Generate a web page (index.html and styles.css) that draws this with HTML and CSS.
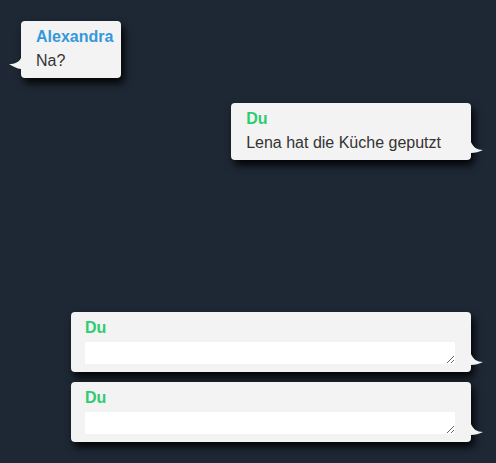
FILE: index.html
```html
<!DOCTYPE html>
<html lang="de">
<head>
<meta charset="utf-8">
<title>Chat</title>
<link rel="stylesheet" href="styles.css">
</head>
<body>
<div class="chat">
  <div class="messages">
    <div class="bubble bubble--in">
      <div class="name name--them">Alexandra</div>
      <div class="text">Na?</div>
    </div>
    <div class="bubble bubble--out">
      <div class="name name--me">Du</div>
      <div class="text">Lena hat die Küche geputzt</div>
    </div>
  </div>
  <div class="composer">
    <div class="bubble bubble--out bubble--input">
      <div class="name name--me">Du</div>
      <textarea class="field"></textarea>
    </div>
    <div class="bubble bubble--out bubble--input">
      <div class="name name--me">Du</div>
      <textarea class="field"></textarea>
    </div>
  </div>
</div>
</body>
</html>
```

FILE: styles.css
```css
html, body {
  margin: 0;
  height: 100%;
}
body {
  background: #1e2835;
  font-family: "Liberation Sans", Arial, sans-serif;
  font-size: 16px;
  line-height: 22px;
  color: #333333;
}
.chat {
  box-sizing: border-box;
  height: 100vh;
  padding: 21px 25px 21px 21px;
  display: flex;
  flex-direction: column;
}
.messages {
  flex: 1;
  display: flex;
  flex-direction: column;
  gap: 25px;
}
.composer {
  display: flex;
  flex-direction: column;
  align-items: flex-end;
  gap: 10px;
}
.bubble {
  position: relative;
  background: #f3f3f3;
  border-radius: 4px;
  padding: 5px 15px 6px 15px;
  box-shadow: 3px 5px 8px rgba(0, 0, 0, 0.95);
}
.bubble--in {
  align-self: flex-start;
  padding-right: 8px;
}
.bubble--out {
  align-self: flex-end;
  padding-right: 30px;
}
.bubble--input {
  box-sizing: border-box;
  width: 400px;
  padding: 5px 15px 8px 14px;
}
.bubble--in::before,
.bubble--out::after {
  content: "";
  position: absolute;
  width: 12px;
  height: 11px;
  background: #f3f3f3;
}
.bubble--in::before {
  left: -12px;
  bottom: 9px;
  clip-path: path("M12 0 C10 4 6 6 0 6 C4 8 8 11 12 11 Z");
}
.bubble--out::after {
  right: -12px;
  bottom: 7px;
  clip-path: path("M0 0 C2 5 6 8 12 8 C8 10 4 11 0 11 Z");
}
.name {
  font-weight: bold;
  margin-bottom: 2px;
}
.name--them {
  color: #3498db;
}
.name--me {
  color: #2ecc71;
}
.field {
  display: block;
  box-sizing: border-box;
  width: 370px;
  height: 22px;
  margin-top: 3px;
  padding: 2px 4px;
  border: none;
  border-radius: 0;
  background: #ffffff;
  font: inherit;
  outline: none;
}
.bubble--input .name {
  margin-bottom: 0;
}
```
